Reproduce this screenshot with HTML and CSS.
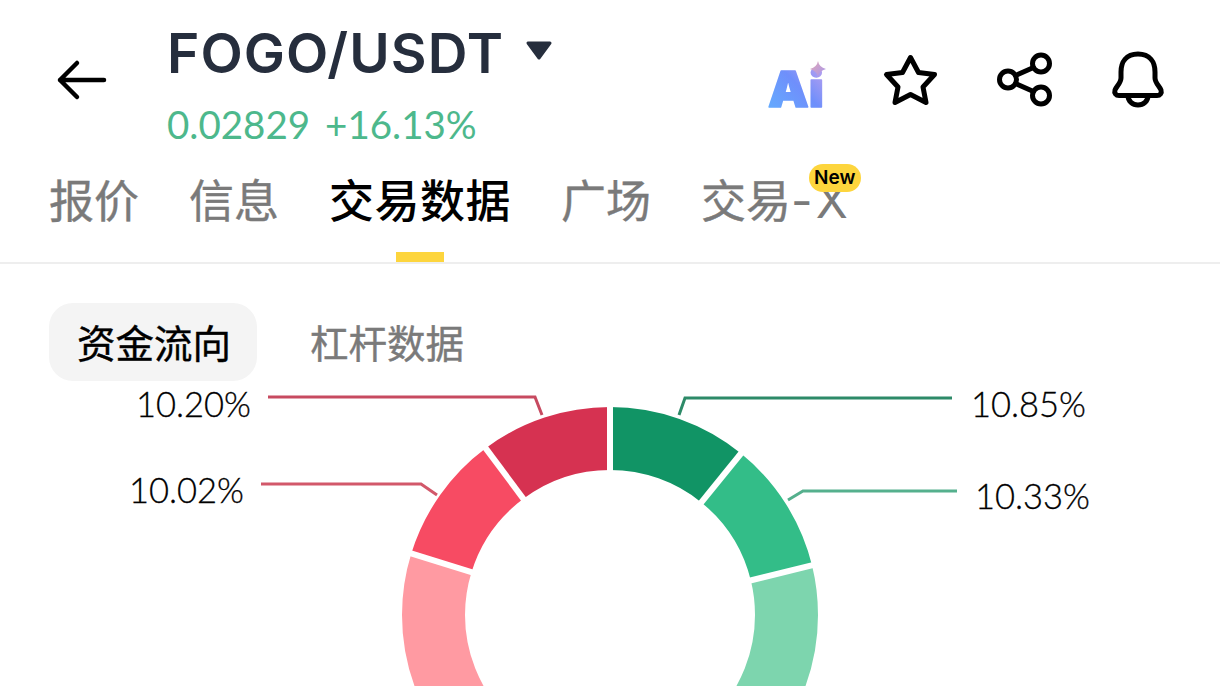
FILE: index.html
```html
<!DOCTYPE html>
<html>
<head>
  <title>FOGO/USDT</title>
  <link rel="stylesheet" href="styles.css">
</head>
<body>
  <div class="header">
    <svg class="icon" viewBox="50 48 64 64"><path d="M104 80H60M77 63L60 80L77 97"/></svg>
    <div class="pair">
      <div class="pair-title">
        <span>FOGO/USDT</span>
        <svg class="caret" viewBox="0 0 28 20"><path d="M3 2H25L14 17Z"/></svg>
      </div>
      <div class="pair-price">
        <span>0.02829</span>
        <span>+16.13%</span>
      </div>
    </div>
    <div class="actions">
      <svg class="ai" viewBox="765 48 64 64">
        <defs>
          <linearGradient id="aiFill" x1="0" y1="1" x2="1" y2="0">
            <stop offset="0" stop-color="#62b0ff"/>
            <stop offset="0.55" stop-color="#6f8ffb"/>
            <stop offset="1" stop-color="#c9a3ec"/>
          </linearGradient>
          <linearGradient id="aiStar" x1="0" y1="0" x2="1" y2="1">
            <stop offset="0" stop-color="#e3a8b4"/>
            <stop offset="1" stop-color="#a596f0"/>
          </linearGradient>
        </defs>
        <text x="768" y="106.500" class="ai-text" fill="url(#aiFill)" stroke="url(#aiFill)" textLength="56" lengthAdjust="spacingAndGlyphs">Ai</text>
        <path d="M818 61Q819 67 826 69Q819 71 818 77Q817 71 810 69Q817 67 818 61Z" fill="url(#aiStar)"/>
      </svg>
      <svg class="icon icon-thick" viewBox="879 48 64 64"><path d="M910.500 57.500L918.500 72.500L934.500 74.500L923 87L926 102.500L910.500 94.500L895 102.500L898 87L886.500 74.500L902.500 72.500Z"/></svg>
      <svg class="icon icon-thick" viewBox="993 48 64 64">
        <circle cx="1041" cy="63.500" r="8.500"/>
        <circle cx="1008" cy="79.500" r="8.500"/>
        <circle cx="1041" cy="95.500" r="8.500"/>
        <path d="M1033.500 67.500L1015.500 75.500M1015.500 83.500L1033.500 91.500"/>
      </svg>
      <svg class="icon icon-thick" viewBox="1107 48 64 64">
        <path d="M1138 54C1126 54 1121 62 1121 72V78C1121 83 1116 87 1115 90C1114 93 1116 95.500 1119 95.500H1157C1160 95.500 1162 93 1161 90C1160 87 1155 83 1155 78V72C1155 62 1150 54 1138 54Z"/>
        <path d="M1128 96A10 9 0 0 0 1148 96"/>
      </svg>
    </div>
  </div>

  <div class="tabs">
    <div class="tab">报价</div>
    <div class="tab">信息</div>
    <div class="tab tab-active">交易数据</div>
    <div class="tab">广场</div>
    <div class="tab">交易<span class="tab-suffix">-X</span><span class="badge">New</span></div>
  </div>

  <div class="subtabs">
    <div class="subtab subtab-active">资金流向</div>
    <div class="subtab">杠杆数据</div>
  </div>

  <svg class="chart" viewBox="0 381 1220 305">
    <g class="ring" transform="rotate(-90 610 615)">
      <circle cx="610" cy="615" r="176.500" pathLength="100" stroke="#119465" stroke-dasharray="10.85 89.15"/>
      <circle cx="610" cy="615" r="176.500" pathLength="100" stroke="#33bd88" stroke-dasharray="10.33 89.67" stroke-dashoffset="-10.85"/>
      <circle cx="610" cy="615" r="176.500" pathLength="100" stroke="#7dd5ae" stroke-dasharray="28.82 71.18" stroke-dashoffset="-21.18"/>
      <circle cx="610" cy="615" r="176.500" pathLength="100" stroke="#ff9aa2" stroke-dasharray="29.78 70.22" stroke-dashoffset="-50"/>
      <circle cx="610" cy="615" r="176.500" pathLength="100" stroke="#f74b63" stroke-dasharray="10.02 89.98" stroke-dashoffset="-79.78"/>
      <circle cx="610" cy="615" r="176.500" pathLength="100" stroke="#d63251" stroke-dasharray="10.20 89.80" stroke-dashoffset="-89.80"/>
    </g>
    <g class="gaps">
      <path d="M610 615V400"/>
      <path d="M610 615L745.400 448"/>
      <path d="M610 615L818.800 563.700"/>
      <path d="M610 615L404.600 551.400"/>
      <path d="M610 615L481.500 442.600"/>
    </g>
    <g class="leaders">
      <path d="M268 397H535L542 415" stroke="#c74a60"/>
      <path d="M261 484H421L437 495" stroke="#d2586a"/>
      <path d="M952 398H685L679 415" stroke="#2d8a68"/>
      <path d="M957 491H803L788 500" stroke="#55b08d"/>
    </g>
    <g class="labels">
      <text x="136" y="417">10.20%</text>
      <text x="129" y="503">10.02%</text>
      <text x="971" y="417">10.85%</text>
      <text x="975" y="509">10.33%</text>
    </g>
  </svg>
</body>
</html>
```
FILE: styles.css
```css
html, body {
  margin: 0;
  height: 686px;
  overflow: hidden;
  background: #ffffff;
}

body {
  font-family: "Lato", "Noto Sans CJK SC", sans-serif;
  color: #000000;
}

.header {
  display: flex;
  align-items: center;
  height: 160px;
  padding: 0 49px 0 50px;
}

.icon {
  width: 64px;
  height: 64px;
  fill: none;
  stroke: #000000;
  stroke-width: 4.500;
  stroke-linecap: round;
  stroke-linejoin: round;
}

.icon-thick {
  stroke-width: 5;
}

.pair {
  margin-left: 53px;
  padding-top: 9px;
}

.pair-title {
  display: flex;
  align-items: center;
  gap: 21px;
  font-family: "Inter", sans-serif;
  font-size: 55px;
  font-weight: 600;
  letter-spacing: 1.100px;
  line-height: 66px;
  color: #262e3d;
}

.caret {
  width: 28px;
  height: 20px;
  fill: #262e3d;
  stroke: #262e3d;
  stroke-width: 3;
  stroke-linejoin: round;
  margin-bottom: 4px;
}

.pair-price {
  display: flex;
  gap: 15px;
  margin-top: 13px;
  font-size: 38.500px;
  line-height: 50px;
  color: #4db88c;
}

.actions {
  display: flex;
  gap: 50px;
  margin-left: auto;
}

.ai {
  width: 64px;
  height: 64px;
  overflow: visible;
}

.ai-text {
  font-family: "Inter", sans-serif;
  font-size: 49px;
  font-weight: 900;
  stroke-width: 1.500;
  stroke-linejoin: round;
}

.tabs {
  position: relative;
  display: flex;
  gap: 50px;
  height: 102px;
  padding: 0 49px;
  border-bottom: 2px solid #eeeeee;
  font-family: "Noto Sans CJK SC", sans-serif;
  font-size: 45px;
  line-height: 78px;
  color: #7a7a7a;
  -webkit-text-stroke: 0.400px #7a7a7a;
}

.tab {
  position: relative;
  height: 102px;
}

.tab-suffix {
  font-family: "Inter", sans-serif;
  font-size: 47px;
  font-weight: 400;
  letter-spacing: 3px;
  -webkit-text-stroke: 0;
}

.tab-active {
  color: #000000;
  font-weight: 500;
  letter-spacing: 0.500px;
  -webkit-text-stroke: 0;
}

.tab-active::after {
  content: "";
  position: absolute;
  left: 67px;
  bottom: 0;
  width: 48px;
  height: 10px;
  background: #fdd53d;
}

.badge {
  position: absolute;
  top: 4px;
  right: -10px;
  width: 52px;
  height: 28px;
  border-radius: 14px;
  background: #fdd53d;
  color: #000000;
  font-family: "Inter", sans-serif;
  font-size: 19px;
  font-weight: 600;
  letter-spacing: 0;
  line-height: 28px;
  text-align: center;
  -webkit-text-stroke: 0;
}

.subtabs {
  display: flex;
  gap: 53px;
  padding: 39px 0 0 49px;
  font-family: "Noto Sans CJK SC", sans-serif;
  font-size: 38.500px;
  color: #7a7a7a;
  -webkit-text-stroke: 0.400px #7a7a7a;
}

.subtab {
  height: 78px;
  line-height: 76px;
}

.subtab-active {
  padding: 0 26px 0 28px;
  border-radius: 24px;
  background: #f4f4f4;
  color: #000000;
  -webkit-text-stroke: 0.400px #000000;
}

.chart {
  display: block;
  width: 1220px;
  height: 305px;
}

.ring circle {
  fill: none;
  stroke-width: 63;
}

.gaps path {
  stroke: #ffffff;
  stroke-width: 6;
}

.leaders path {
  fill: none;
  stroke-width: 3;
}

.labels text {
  font-family: "Lato", sans-serif;
  font-size: 34.500px;
  font-weight: 300;
  fill: #000000;
  stroke: #000000;
  stroke-width: 0.300;
}
```
